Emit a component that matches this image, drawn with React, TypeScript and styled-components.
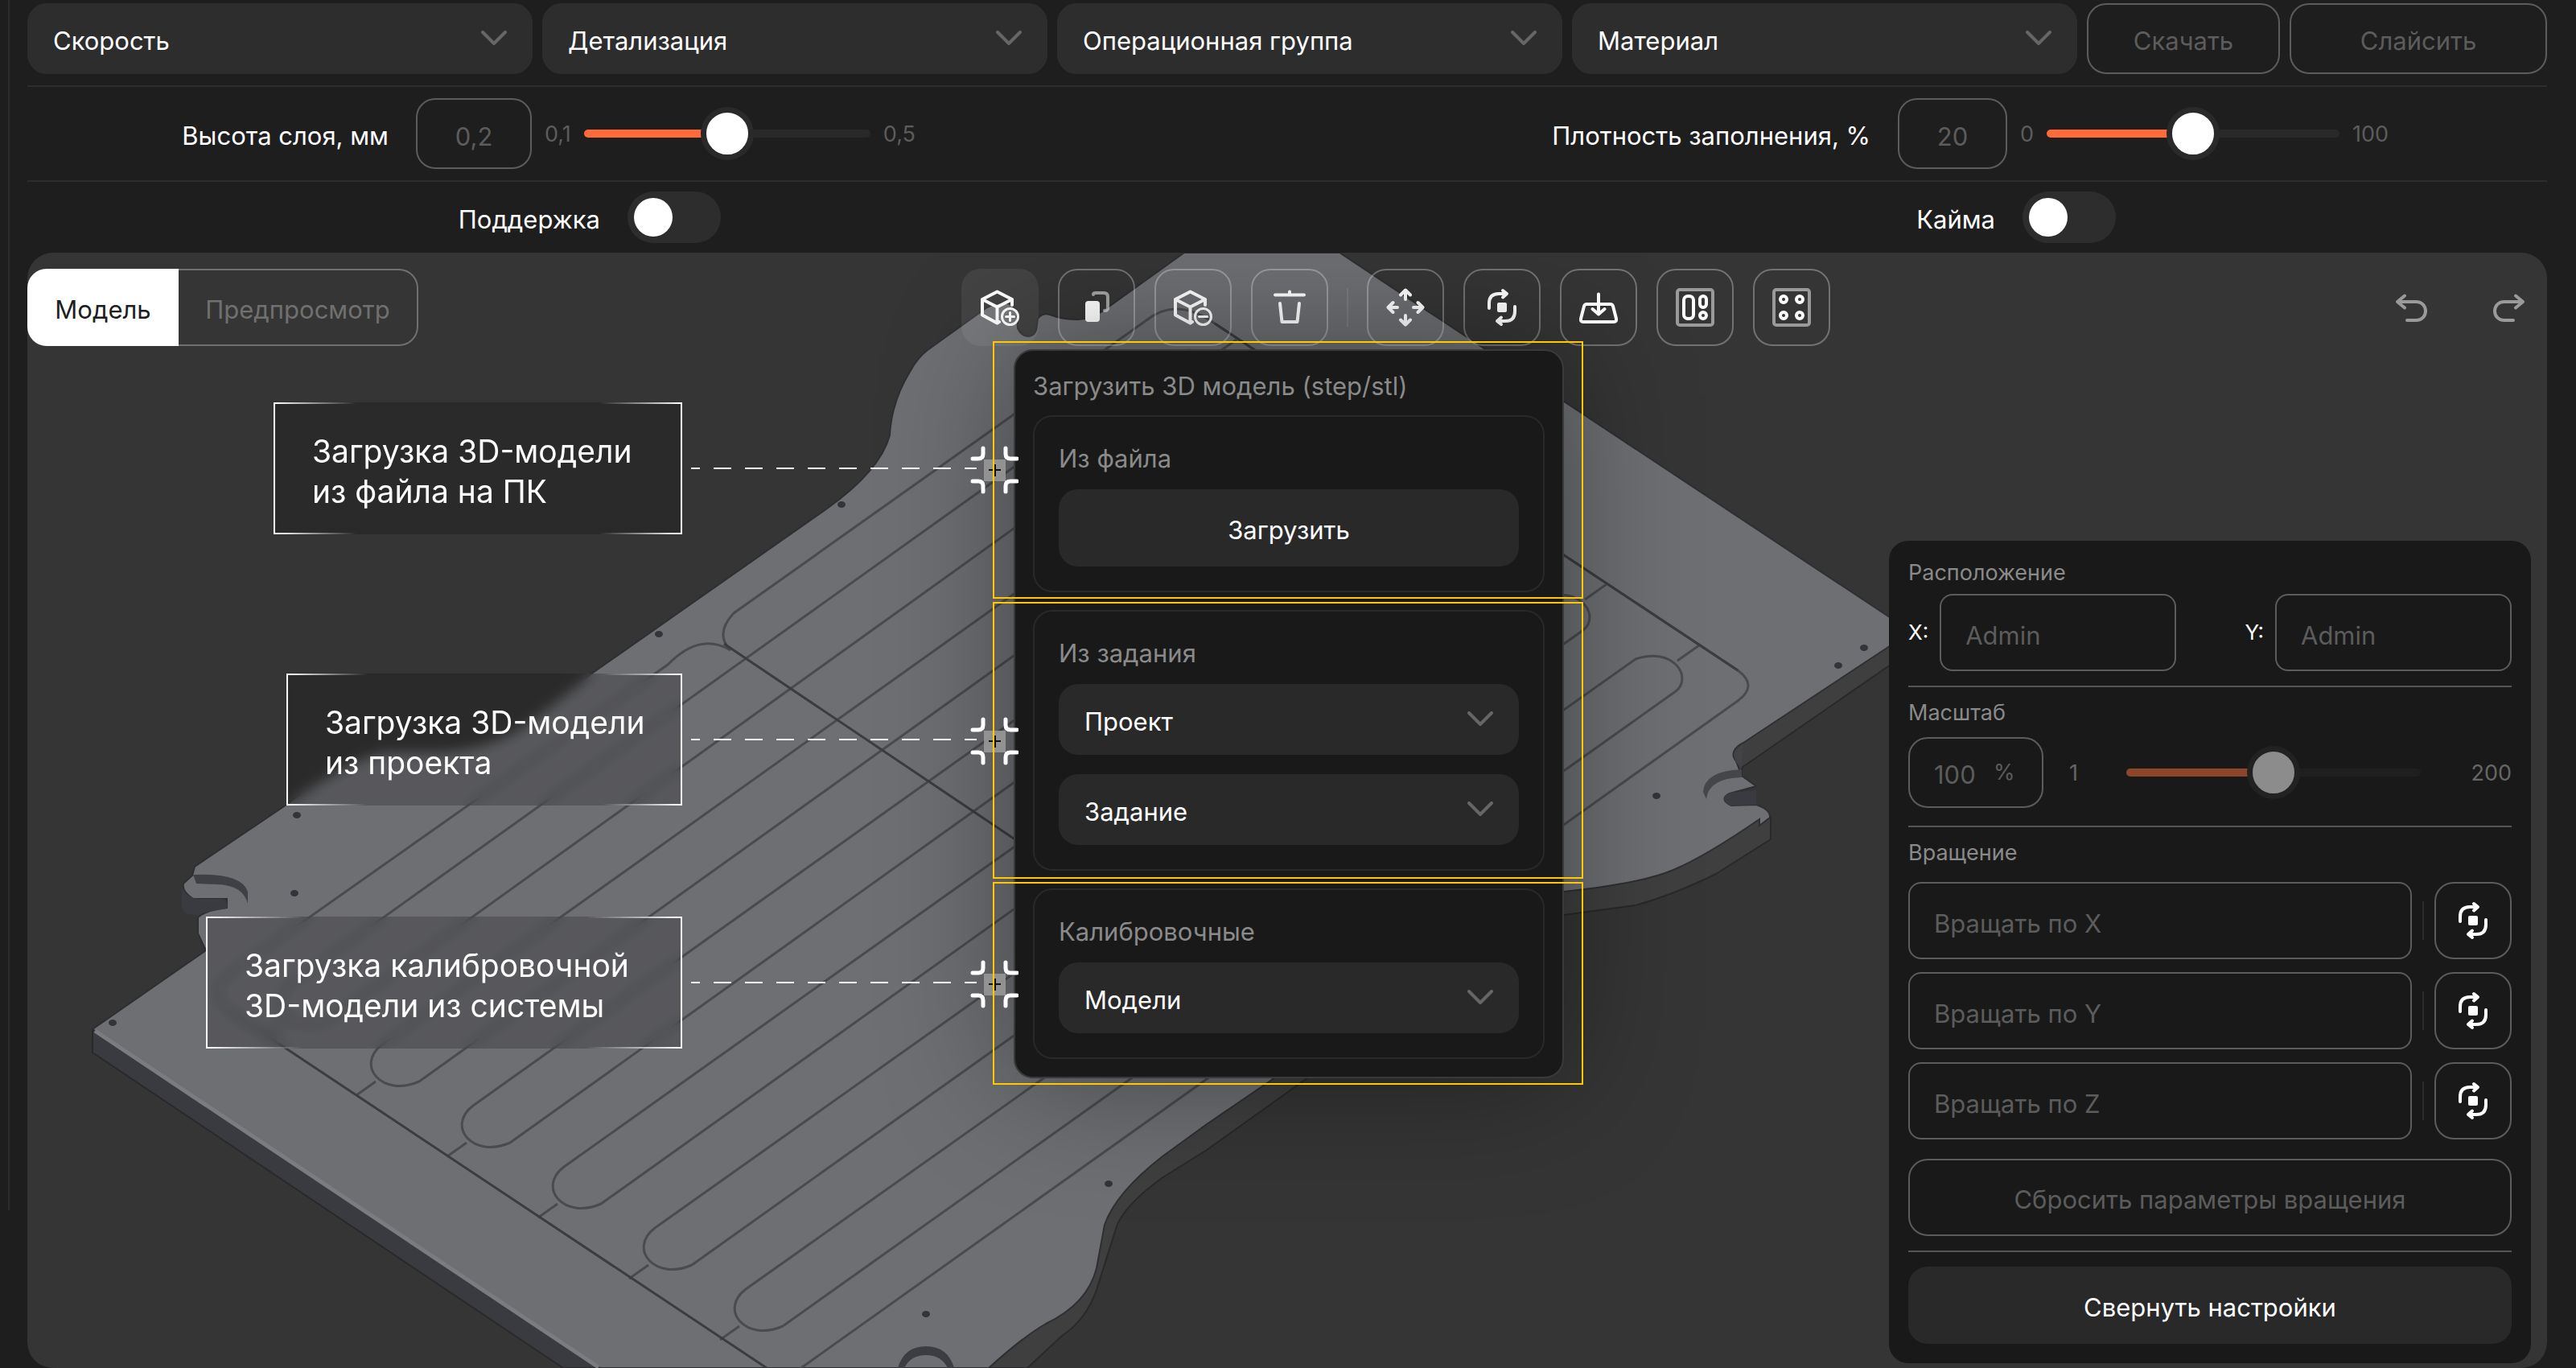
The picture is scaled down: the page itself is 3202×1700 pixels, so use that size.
import React, { useId, useState } from "react";
import styled, { createGlobalStyle, css } from "styled-components";

const color = {
  page: "#1e1e1e",
  field: "#2d2d2d",
  line: "#2d2d2d",
  outline: "#5c5c5c",
  muted: "#5c5c5c",
  caption: "#8a8a8a",
  panel: "#191919",
  panelField: "#292929",
  viewport: "#353535",
  accent: "#ff6b38",
  highlight: "#ffc800",
};

const GlobalStyle = createGlobalStyle`
  *, *::before, *::after { box-sizing: border-box; }
  body {
    margin: 0;
    background: ${color.page};
    color: #fff;
    font-family: Inter, "Noto Sans", sans-serif;
    font-size: 31px;
    line-height: 40px;
  }
  button, input, select { font: inherit; color: inherit; margin: 0; }
`;

/* ---------- page frame ---------- */

const Page = styled.div`
  position: relative;
  display: flex;
  flex-direction: column;
  min-height: 100vh;
  padding: 4px 36px 0 34px;
`;

const SideRule = styled.div`
  position: absolute;
  left: 10px;
  top: 0;
  bottom: 196px;
  width: 2px;
  background: ${color.line};
`;

const TopBar = styled.header`
  display: grid;
  grid-template-columns: repeat(4, 1fr) 240px 320px;
  gap: 12px;
  padding-bottom: 14px;
  border-bottom: 2px solid ${color.line};
`;

const outlined = css`
  background: transparent;
  border: 2px solid ${color.outline};
  border-radius: 24px;
`;

const OutlineButton = styled.button<{ $tall?: boolean }>`
  ${outlined}
  width: 100%;
  height: ${(p) => (p.$tall ? 96 : 88)}px;
  padding: 6px 0 0;
  color: ${color.muted};
`;

const SolidButton = styled.button`
  width: 100%;
  height: 96px;
  padding: 6px 0 0;
  border: 0;
  border-radius: 24px;
  background: ${color.panelField};
  color: #fff;
`;

/* ---------- drop-down ---------- */

const SelectBox = styled.div`
  display: grid;
  align-items: center;
  & > * { grid-area: 1 / 1; }
`;

const NativeSelect = styled.select<{ $inPanel?: boolean }>`
  appearance: none;
  width: 100%;
  height: 88px;
  padding: 6px 80px 0 32px;
  border: 0;
  border-radius: 24px;
  background: ${(p) => (p.$inPanel ? color.panelField : color.field)};
  color: #fff;
`;

const Chevron = styled.svg`
  justify-self: end;
  width: 32px;
  height: 20px;
  margin-right: 32px;
  pointer-events: none;
`;

function Select({ name, inPanel }: { name: string; inPanel?: boolean }) {
  return (
    <SelectBox>
      <NativeSelect aria-label={name} $inPanel={inPanel}>
        <option>{name}</option>
      </NativeSelect>
      <Chevron viewBox="0 0 32 20" fill="none" stroke="#666" strokeWidth="4" strokeLinecap="round" strokeLinejoin="round">
        <path d="M2 2 16 16 30 2" />
      </Chevron>
    </SelectBox>
  );
}

/* ---------- parameter rows ---------- */

const ParamRow = styled.div<{ $columns: string; $height: number; $ruled?: boolean }>`
  display: grid;
  grid-template-columns: ${(p) => p.$columns};
  align-items: center;
  height: ${(p) => p.$height}px;
  border-bottom: ${(p) => (p.$ruled ? `2px solid ${color.line}` : "0")};
`;

const ParamLabel = styled.label`
  padding-top: 6px;
  text-align: right;
  white-space: nowrap;
`;

const ParamControls = styled.div`
  display: flex;
  align-items: center;
  gap: 16px;
  padding-left: 34px;
`;

const NumberBox = styled.input<{ $width: number }>`
  ${outlined}
  width: ${(p) => p.$width}px;
  height: 88px;
  padding: 6px 0 0;
  text-align: center;
  color: ${color.muted};
`;

const Limit = styled.span<{ $bright?: boolean }>`
  padding-top: 2px;
  color: ${(p) => (p.$bright ? "#666" : color.muted)};
  font-size: 27px;
  line-height: 32px;
  &:last-child { text-align: right; }
`;

const Range = styled.input<{ $width: number; $dim?: boolean }>`
  --ring: ${(p) => (p.$dim ? "#222" : "#2a2a2a")};
  --rest: ${(p) => (p.$dim ? "#1f1f1f" : "#292929")};
  --fill: ${(p) => (p.$dim ? "#8f452b" : color.accent)};
  --knob: ${(p) => (p.$dim ? "#8c8c8c" : "#fff")};
  appearance: none;
  width: ${(p) => p.$width}px;
  height: 66px;
  background: transparent;
  &::-webkit-slider-runnable-track {
    height: 10px;
    border-radius: 5px;
    background: linear-gradient(90deg, var(--fill) 50%, var(--rest) 50%);
  }
  &::-webkit-slider-thumb {
    appearance: none;
    width: 66px;
    height: 66px;
    margin-top: -28px;
    border: 7px solid var(--ring);
    border-radius: 50%;
    background: var(--knob);
  }
`;

const Toggle = styled.input`
  appearance: none;
  display: flex;
  align-items: center;
  width: 116px;
  height: 64px;
  padding: 0 8px;
  border-radius: 32px;
  background: ${color.field};
  &::before {
    content: "";
    width: 48px;
    height: 48px;
    border-radius: 50%;
    background: #fff;
  }
  &:checked { justify-content: flex-end; background: ${color.accent}; }
`;

/* ---------- viewport ---------- */

const Viewport = styled.main`
  position: relative;
  display: flex;
  flex: 1;
  flex-direction: column;
  border-radius: 32px;
  background: ${color.viewport};
  overflow: hidden;
`;

const Scene = styled.svg`
  position: absolute;
  inset: 0;
  width: 100%;
  height: 100%;
`;

const ViewBar = styled.div`
  position: relative;
  z-index: 1;
  display: flex;
  justify-content: space-between;
  padding-top: 20px;
`;

const Tabs = styled.div`
  display: flex;
`;

const Tab = styled.button<{ $active?: boolean }>`
  height: 96px;
  width: ${(p) => (p.$active ? 188 : 298)}px;
  padding: 6px 0 0;
  border: 2px solid ${(p) => (p.$active ? "#fff" : "#707070")};
  border-left-width: ${(p) => (p.$active ? 2 : 0)}px;
  border-radius: ${(p) => (p.$active ? "24px 0 0 24px" : "0 24px 24px 0")};
  background: ${(p) => (p.$active ? "#fff" : "transparent")};
  color: ${(p) => (p.$active ? "#1e1e1e" : "#707070")};
`;

const Tools = styled.div`
  position: relative;
  display: flex;
  align-items: center;
  gap: 24px;
`;

const ToolDivider = styled.div<{ $dark?: boolean }>`
  width: 2px;
  height: 48px;
  margin: 0 -1px;
  background: ${(p) => (p.$dark ? "#2d2d2d" : "rgba(255, 255, 255, 0.1)")};
`;

const ToolButton = styled.button<{ $look?: "active" | "plain" | "panel" }>`
  display: grid;
  flex: none;
  place-items: center;
  width: 96px;
  height: 96px;
  padding: 0;
  border: 2px solid
    ${(p) => (p.$look === "panel" ? color.outline : p.$look ? "transparent" : "rgba(255, 255, 255, 0.3)")};
  border-radius: 24px;
  background: ${(p) => (p.$look === "active" ? "rgba(255, 255, 255, 0.07)" : "transparent")};
  color: ${(p) => (p.$look === "plain" ? "#9a9a9a" : "#fff")};
`;

const Glyph = styled.svg.attrs({
  viewBox: "0 0 48 48",
  fill: "none",
  stroke: "currentColor",
  strokeWidth: 4,
  strokeLinecap: "round",
  strokeLinejoin: "round",
})`
  width: 48px;
  height: 48px;
`;

const CubeShape = () => (
  <>
    <path d="M39 21V14L20.500 4.500 2 14V33.500L20.500 43.500 23 42M2 14 20.500 23.500 39 14M20.500 23.500V43" />
    <circle cx="36.500" cy="35.500" r="10" strokeWidth="3" />
  </>
);

const AddIcon = () => (
  <Glyph>
    <CubeShape />
    <path d="M31.500 35.500H41.500M36.500 30.500V40.500" strokeWidth="3" />
  </Glyph>
);

const RemoveIcon = () => (
  <Glyph>
    <CubeShape />
    <path d="M31.500 35.500H41.500" strokeWidth="3" />
  </Glyph>
);

const CopyIcon = () => (
  <Glyph>
    <rect x="10" y="16" width="18" height="26" rx="4" fill="currentColor" stroke="none" />
    <path d="M20 8Q20 6 23 6H33Q38 6 38 11V25Q38 28 34 28" opacity="0.55" />
  </Glyph>
);

const TrashIcon = () => (
  <Glyph>
    <path d="M6 8.500H42M24 4.500V8M12 19 14.500 42H33.500L36 19" />
  </Glyph>
);

const MoveIcon = () => (
  <Glyph>
    {[0, 90, 180, 270].map((turn) => (
      <path key={turn} transform={`rotate(${turn} 24 24)`} d="M24 3V14M18 8.500 24 2.500 30 8.500" />
    ))}
  </Glyph>
);

const RotateIcon = () => (
  <Glyph>
    <rect x="18" y="18" width="12" height="12" rx="2" fill="currentColor" stroke="none" />
    {[0, 180].map((turn) => (
      <path key={turn} transform={`rotate(${turn} 24 24)`} d="M8 25V19Q8 7 20 7H29M25 3 30 7 25 11.500" />
    ))}
  </Glyph>
);

const PlaceIcon = () => (
  <Glyph>
    <path d="M9 20H39Q41 20 42 22.500L46 38Q46.500 42 43 42H5Q1.500 42 2 38L6 22.500Q7 20 9 20ZM24 7.500V32M16.500 26 24 32.500 31.500 26" />
  </Glyph>
);

const ArrangeIcon = () => (
  <Glyph>
    <rect x="2" y="2" width="44" height="44" rx="3" opacity="0.5" />
    <rect x="10" y="10" width="12" height="28" rx="5" />
    <rect x="30" y="10" width="8" height="14" rx="4" />
    <circle cx="34" cy="34" r="4" />
  </Glyph>
);

const GridIcon = () => (
  <Glyph>
    <rect x="2" y="2" width="44" height="44" rx="3" opacity="0.5" />
    <circle cx="14" cy="14" r="4" />
    <circle cx="34" cy="14" r="4" />
    <circle cx="14" cy="34" r="4" />
    <circle cx="34" cy="34" r="4" />
  </Glyph>
);

const UndoIcon = ({ flip }: { flip?: boolean }) => (
  <Glyph>
    <path
      transform={flip ? "matrix(-1 0 0 1 48 0)" : undefined}
      d="M15 9.500 6 17 15 24.500M7 17H29C45 17 45 40 29 40H18"
    />
  </Glyph>
);

/* ---------- upload popover ---------- */

const PopoverAnchor = styled.div`
  position: absolute;
  top: 100px;
  left: 65px;
  width: 684px;
`;

const Popover = styled.section`
  display: flex;
  flex-direction: column;
  gap: 22px;
  padding: 22px;
  border: 2px solid #3a3a3a;
  border-radius: 24px;
  background: ${color.panel};
  box-shadow: 0 0 160px rgba(0, 0, 0, 0.4);
`;

const caption = css`
  margin: 2px 0 -6px;
  color: ${color.caption};
  font-size: 31px;
  font-weight: 400;
  line-height: 40px;
`;

const PopoverTitle = styled.h2`
  ${caption}
`;

const CardTitle = styled.h3`
  ${caption}
`;

const Card = styled.div`
  display: flex;
  flex-direction: column;
  gap: 24px;
  padding: 30px;
  border: 2px solid #292929;
  border-radius: 24px;
`;

const Frame = styled.div<{ $top: number; $height: number }>`
  position: absolute;
  top: ${(p) => p.$top}px;
  left: -26px;
  right: -24px;
  height: ${(p) => p.$height}px;
  border: 2px solid ${color.highlight};
  pointer-events: none;
`;

const Annotation = styled.div<{ $top: number }>`
  position: absolute;
  top: ${(p) => p.$top}px;
  right: calc(100% - 6px);
  display: flex;
  align-items: center;
`;

const Callout = styled.p<{ $width: number }>`
  width: ${(p) => p.$width}px;
  height: 164px;
  margin: 0 11px 0 0;
  padding: 36px 0 0 46px;
  border: solid #fff;
  border-width: 0 2px;
  background:
    linear-gradient(90deg, #fff, transparent 20%, transparent 80%, #fff) top / 100% 2px no-repeat,
    linear-gradient(90deg, #fff, transparent 20%, transparent 80%, #fff) bottom / 100% 2px no-repeat,
    rgba(0, 0, 0, 0.2);
  backdrop-filter: blur(8px);
  font-size: 39px;
  line-height: 50px;
  white-space: pre;
`;

const Dashes = styled.span`
  width: 355px;
  height: 2px;
  background: repeating-linear-gradient(90deg, #fff 0 11px, transparent 11px 28px, #fff 28px 39px);
`;

const Target = styled.svg`
  width: 60px;
  height: 60px;
  margin: 4px 0 0 -8px;
`;

function Note({ top, width, text }: { top: number; width: number; text: string }) {
  return (
    <Annotation $top={top}>
      <Callout $width={width}>{text}</Callout>
      <Dashes />
      <Target viewBox="0 0 60 60" fill="none">
        <rect x="17" y="17" width="27" height="27" fill="#989898" opacity="0.9" />
        <path d="M23 30H38M31 23V38" stroke="#111" strokeWidth="2" />
        <path
          d="M3 16H10Q16 16 16 10V3M58 16H50Q44 16 44 10V3M3 44H10Q16 44 16 50V57M58 44H50Q44 44 44 50V57"
          stroke="#fff"
          strokeWidth="5"
          strokeLinecap="round"
        />
      </Target>
    </Annotation>
  );
}

/* ---------- settings panel ---------- */

const Settings = styled.aside`
  position: relative;
  align-self: flex-end;
  width: 798px;
  margin: auto 20px 6px 0;
  padding: 26px 24px 24px;
  border-radius: 24px;
  background: ${color.panel};
`;

const SettingsTitle = styled.h3<{ $gap: number }>`
  margin: 0 0 ${(p) => p.$gap}px;
  color: ${color.caption};
  font-size: 27px;
  font-weight: 400;
  line-height: 28px;
`;

const Rule = styled.hr`
  height: 2px;
  margin: 18px 0;
  border: 0;
  background: #555;
`;

const Axes = styled.div`
  display: flex;
  justify-content: space-between;
`;

const AxisField = styled.label`
  display: flex;
  align-items: center;
  gap: 14px;
  font-size: 26px;
`;

const TextField = styled.input<{ $width?: number }>`
  flex: ${(p) => (p.$width ? "none" : "1")};
  width: ${(p) => (p.$width ? `${p.$width}px` : "auto")};
  min-width: 0;
  height: 96px;
  padding: 6px 30px 0;
  border: 2px solid ${color.outline};
  border-radius: 16px;
  background: transparent;
  font-size: 31px;
  &::placeholder { color: ${color.muted}; opacity: 1; }
`;

const ScaleRow = styled.div`
  display: grid;
  grid-template-columns: 168px 39px 366px 1fr;
  align-items: center;
  column-gap: 32px;
  height: 96px;
`;

const PercentField = styled.label`
  ${outlined}
  display: flex;
  align-items: center;
  height: 88px;
  padding: 0 30px;
  color: ${color.muted};
  font-size: 27px;
`;

const PercentInput = styled.input`
  width: 74px;
  padding: 6px 0 0;
  border: 0;
  background: transparent;
  color: ${color.muted};
  font-size: 31px;
`;

const RotateRows = styled.div`
  display: grid;
  gap: 16px;
  margin-bottom: 24px;
`;

const RotateRow = styled.div`
  display: flex;
  align-items: center;
  gap: 14px;
`;

/* ---------- build plate ---------- */

const surface =
  "M1665 314 L2376 785 2167 923 Q2148 933 2158 946 L2165 964 2183 977 2150 986 Q2136 993 2152 1001 L2183 1000 Q2201 1006 2200 1016 L2187 1026 2187 1018 Q2120 1064 2080 1081 T1944 1108 Q1760 1150 1585 1339 L1500 1397 1445 1437 Q1387 1482 1373 1522 L1363 1576 Q1352 1620 1300 1645 Q1272 1661 1229 1700 L746 1700 115 1279 256 1181 246 1160 246 1140 Q258 1130 282 1128 L282 1117 240 1117 Q226 1108 228 1098 L239 1088 242 1077 356 1000 Q446 934 488 934 L544 934 Q610 932 660 896 L737 836 1028 632 Q1094 585 1106 541 Q1108 500 1131 462 Q1140 445 1153 435 L1227 382 Q1255 368 1264 388 L1265 408 Q1270 418 1278 418 Q1288 417 1289 405 L1290 396 Q1297 387 1308 392 Q1320 397 1340 397 Q1360 396 1380 380 L1472 314Z";

const walls =
  "M2376 785 V808 L2165 954 V1000 L2201 1015 V1043 L2133 1086 Q2080 1112 2033 1125 L1944 1137 Q1770 1190 1626 1339 L1500 1429 1444 1464 Q1395 1500 1387 1527 L1363 1603 Q1350 1640 1320 1660 L1277 1700 H1200 L1380 1450 1950 1090 2140 930Z";

const holes = [
  [1046, 627], [819, 788], [369, 1013], [366, 1110], [140, 1271],
  [1378, 1471], [1151, 1633], [2317, 805], [2285, 827], [2059, 989],
];

function groove(n: number) {
  const bx = 497 + 113 * (n - 1);
  const by = 1350 + 76 * (n - 1);
  const tx = 2097 + 115 * (n - 5);
  const ty = 841 + 76 * (n - 5);
  return (
    `M${bx + 24} ${by - 6}L${tx - 14} ${ty + 18}C${tx + 8} ${ty} ${tx - 18} ${ty - 38} ${tx - 64} ${ty - 22}` +
    `L${bx - 22} ${by - 52}C${bx - 56} ${by - 26} ${bx - 22} ${by + 14} ${bx + 24} ${by - 6}` +
    `M${bx - 30} ${by - 6}l-24 17M${tx - 12} ${ty - 20}l27 -19`
  );
}

function Plate() {
  return (
    <Scene viewBox="34 314 3132 1386" preserveAspectRatio="xMidYMid slice" aria-hidden="true">
      <path d={walls} fill="#3f3f40" stroke="#29292b" strokeWidth="2" />
      <path d="M115 1279V1308L700 1700H750Z" fill="#3a3b41" stroke="#29292b" strokeWidth="2" />
      <path d="M226 1105V1129Q230 1138 245 1137V1163L260 1174 300 1140 300 1090 240 1086Z" fill="#3a3b41" />
      <path d={surface} fill="#6e6f73" stroke="#2e2f32" strokeWidth="2" />
      <path d="M118 1281 744 1699" stroke="#7b7c80" strokeWidth="5" />
      <path d="M240 1087Q300 1084 308 1108V1123Q302 1100 270 1099L244 1098Z" fill="#3f4046" />
      <path d="M228 1106Q234 1117 250 1117H276Q284 1118 282 1129L245 1136Q226 1138 226 1126Z" fill="#3a3b41" />
      <path d="M2165 956Q2119 958 2117 984L2121 993Q2124 967 2165 966Z" fill="#45464a" />
      <path d="M2183 982 2150 985Q2136 993 2150 1001L2183 1000Z" fill="#3a3b41" />
      <path d="M2158 931Q2150 940 2165 955L2167 924Z" fill="#434345" />
      <path d="M1116 1700Q1124 1673 1151 1673T1186 1700H1178Q1170 1684 1151 1684T1124 1700Z" fill="#3c3d42" />
      <g fill="none" stroke="#4a4b4f" strokeWidth="3">
        {[0, 1, 2, 3, 4, 5].map((n) => (
          <path key={n} d={groove(n)} />
        ))}
        <path d="M908 808Q888 788 912 762L1425 398Q1462 368 1510 402L2160 833Q2186 852 2160 871L990 1704" />
        <path d="M908 808Q870 785 830 826L285 1210Q254 1234 285 1256" />
      </g>
      <g fill="none" stroke="#3b3c40" strokeWidth="3">
        <path d="M900 800 1620 1284M285 1256 956 1702M1510 402 2160 833" />
      </g>
      <g fill="#33343a">
        {holes.map(([x, y]) => (
          <ellipse key={x} cx={x} cy={y} rx="5" ry="4" />
        ))}
      </g>
    </Scene>
  );
}

/* ---------- screen ---------- */

function SliderParam(props: { label: string; value: string; from: string; to: string; boxWidth: number; trackWidth: number }) {
  const id = useId();
  return (
    <>
      <ParamLabel htmlFor={id}>{props.label}</ParamLabel>
      <ParamControls>
        <NumberBox id={id} $width={props.boxWidth} defaultValue={props.value} />
        <Limit>{props.from}</Limit>
        <Range type="range" aria-label={props.label} $width={props.trackWidth} />
        <Limit>{props.to}</Limit>
      </ParamControls>
    </>
  );
}

function ToggleParam({ label }: { label: string }) {
  const id = useId();
  return (
    <>
      <ParamLabel htmlFor={id}>{label}</ParamLabel>
      <ParamControls>
        <Toggle id={id} type="checkbox" />
      </ParamControls>
    </>
  );
}

export default function App() {
  const [tab, setTab] = useState("model");
  return (
    <>
      <GlobalStyle />
      <Page>
        <SideRule />
        <TopBar>
          <Select name="Скорость" />
          <Select name="Детализация" />
          <Select name="Операционная группа" />
          <Select name="Материал" />
          <OutlineButton>Скачать</OutlineButton>
          <OutlineButton>Слайсить</OutlineButton>
        </TopBar>
        <ParamRow $columns="449fr 1117fr 725fr 841fr" $height={118} $ruled>
          <SliderParam label="Высота слоя, мм" value="0,2" from="0,1" to="0,5" boxWidth={144} trackWidth={356} />
          <SliderParam label="Плотность заполнения, %" value="20" from="0" to="100" boxWidth={136} trackWidth={364} />
        </ParamRow>
        <ParamRow $columns="712fr 854fr 880fr 686fr" $height={88}>
          <ToggleParam label="Поддержка" />
          <ToggleParam label="Кайма" />
        </ParamRow>

        <Viewport>
          <Plate />
          <ViewBar>
            <Tabs role="tablist">
              <Tab role="tab" aria-selected={tab === "model"} $active onClick={() => setTab("model")}>
                Модель
              </Tab>
              <Tab role="tab" aria-selected={tab === "preview"} onClick={() => setTab("preview")}>
                Предпросмотр
              </Tab>
            </Tabs>

            <Tools>
              <ToolButton $look="active" aria-label="Добавить модель"><AddIcon /></ToolButton>
              <ToolButton aria-label="Копировать"><CopyIcon /></ToolButton>
              <ToolButton aria-label="Убрать модель"><RemoveIcon /></ToolButton>
              <ToolButton aria-label="Удалить"><TrashIcon /></ToolButton>
              <ToolDivider />
              <ToolButton aria-label="Переместить"><MoveIcon /></ToolButton>
              <ToolButton aria-label="Повернуть"><RotateIcon /></ToolButton>
              <ToolButton aria-label="Положить на стол"><PlaceIcon /></ToolButton>
              <ToolButton aria-label="Расставить"><ArrangeIcon /></ToolButton>
              <ToolButton aria-label="Сетка"><GridIcon /></ToolButton>

              <PopoverAnchor>
                <Popover>
                  <PopoverTitle>Загрузить 3D модель (step/stl)</PopoverTitle>
                  <Card>
                    <CardTitle>Из файла</CardTitle>
                    <SolidButton>Загрузить</SolidButton>
                  </Card>
                  <Card>
                    <CardTitle>Из задания</CardTitle>
                    <Select name="Проект" inPanel />
                    <Select name="Задание" inPanel />
                  </Card>
                  <Card>
                    <CardTitle>Калибровочные</CardTitle>
                    <Select name="Модели" inPanel />
                  </Card>
                </Popover>
                <Note top={66} width={508} text={"Загрузка 3D-модели\nиз файла на ПК"} />
                <Note top={403} width={492} text={"Загрузка 3D-модели\nиз проекта"} />
                <Note top={705} width={592} text={"Загрузка калибровочной\n3D-модели из системы"} />
                <Frame $top={-10} $height={320} />
                <Frame $top={314} $height={344} />
                <Frame $top={662} $height={252} />
              </PopoverAnchor>
            </Tools>

            <Tools>
              <ToolButton $look="plain" aria-label="Отменить"><UndoIcon /></ToolButton>
              <ToolButton $look="plain" aria-label="Повторить"><UndoIcon flip /></ToolButton>
            </Tools>
          </ViewBar>

          <Settings>
            <SettingsTitle $gap={12}>Расположение</SettingsTitle>
            <Axes>
              <AxisField>X:<TextField $width={294} placeholder="Admin" /></AxisField>
              <AxisField>Y:<TextField $width={294} placeholder="Admin" /></AxisField>
            </Axes>
            <Rule />
            <SettingsTitle $gap={12}>Масштаб</SettingsTitle>
            <ScaleRow>
              <PercentField>
                <PercentInput defaultValue="100" />%
              </PercentField>
              <Limit $bright>1</Limit>
              <Range type="range" aria-label="Масштаб" $width={366} $dim />
              <Limit $bright>200</Limit>
            </ScaleRow>
            <Rule />
            <SettingsTitle $gap={22}>Вращение</SettingsTitle>
            <RotateRows>
              {["X", "Y", "Z"].map((axis) => (
                <RotateRow key={axis}>
                  <TextField aria-label={`Вращать по ${axis}`} placeholder={`Вращать по ${axis}`} />
                  <ToolDivider $dark />
                  <ToolButton $look="panel" aria-label={`Повернуть по ${axis}`}><RotateIcon /></ToolButton>
                </RotateRow>
              ))}
            </RotateRows>
            <OutlineButton $tall>Сбросить параметры вращения</OutlineButton>
            <Rule />
            <SolidButton>Свернуть настройки</SolidButton>
          </Settings>
        </Viewport>
      </Page>
    </>
  );
}
